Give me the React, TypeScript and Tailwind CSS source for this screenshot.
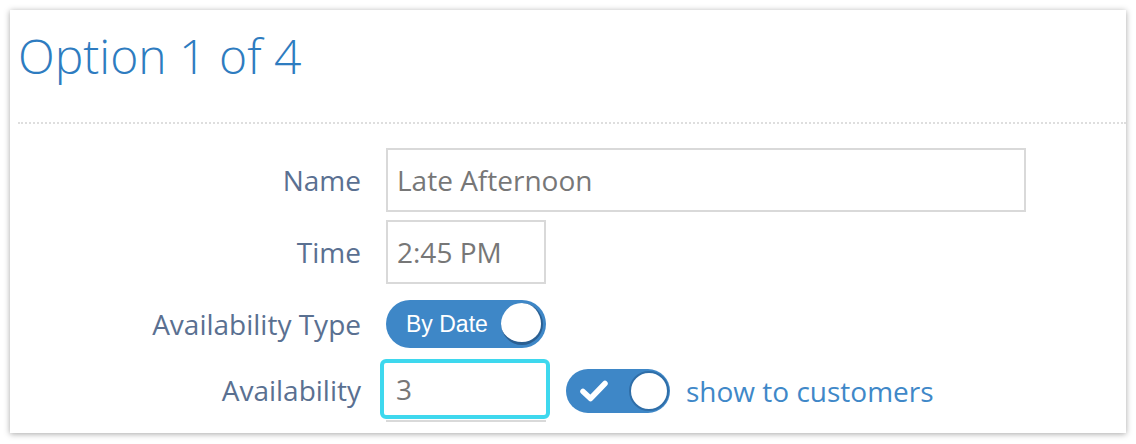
import React from "react";

const labelCls =
  "w-[368px] pr-[25px] text-right text-[28px] leading-none text-[#5a7091] shrink-0";

const Toggle: React.FC<{ children?: React.ReactNode; className?: string }> = ({
  children,
  className,
}) => (
  <div
    className={
      "relative flex items-center rounded-full bg-[#3e87c7] " + (className || "")
    }
  >
    {children}
  </div>
);

export default function App() {
  return (
    <div className="h-[444px] w-[1136px] overflow-hidden bg-white pt-[10px] pl-[10px] font-['Open_Sans',sans-serif]">
      <div className="h-[423px] w-[1116px] overflow-hidden bg-white pl-[8px] shadow-[0_1px_6px_rgba(0,0,0,0.35)]">
        {/* header */}
        <div className="h-[112px] pt-[22px]">
          <h1 className="text-[48px] font-light leading-none text-[#2e7cc0]">
            Option 1 of 4
          </h1>
        </div>
        <div className="border-t-2 border-dotted border-[#dedede]" />

        {/* form */}
        <div className="mt-[24px] flex flex-col">
          <div className="flex h-[64px] items-center">
            <label className={labelCls}>Name</label>
            <div className="flex h-[64px] w-[640px] items-center border-2 border-[#d9d9d9] pl-[9px] text-[28px] text-[#777]">
              Late Afternoon
            </div>
          </div>

          <div className="mt-[8px] flex h-[64px] items-center">
            <label className={labelCls}>Time</label>
            <div className="flex h-[64px] w-[160px] items-center border-2 border-[#d9d9d9] pl-[9px] text-[28px] text-[#777]">
              2:45 PM
            </div>
          </div>

          <div className="mt-[8px] flex h-[64px] items-center">
            <label className={labelCls}>Availability Type</label>
            <Toggle className="h-[48px] w-[160px]">
              <span className="pl-[20px] font-['Liberation_Sans',sans-serif] text-[23px] text-white">
                By Date
              </span>
              <span className="absolute top-[3px] right-[3px] h-[42px] w-[42px] rounded-full border-b-[3px] border-r-[2px] border-[#2a5f92] bg-white" />
            </Toggle>
          </div>

          <div className="mt-[2px] flex h-[64px] items-center">
            <label className={labelCls}>Availability</label>
            <div className="relative h-[64px] w-[160px] border-b-2 border-[#d9d9d9]">
              <div className="absolute top-[1px] right-[-4px] bottom-[1px] left-[-6px] flex items-center rounded-[6px] border-[4px] border-[#3ed8ee] bg-white pl-[12px] text-[28px] text-[#777]">
                3
              </div>
            </div>
            <Toggle className="ml-[20px] mt-[2px] h-[44px] w-[104px]">
              <svg
                className="ml-[13px]"
                width="30"
                height="24"
                viewBox="0 0 30 24"
                fill="none"
              >
                <path
                  d="M4 12.5 L11.5 19.5 L26 4.5"
                  stroke="white"
                  strokeWidth="5.5"
                  strokeLinecap="round"
                  strokeLinejoin="round"
                />
              </svg>
              <span className="absolute top-[2px] right-[1px] h-[40px] w-[40px] rounded-full border-2 border-[#2f6ea8] bg-white" />
            </Toggle>
            <span className="ml-[16px] mt-[2px] text-[28px] leading-none text-[#3f88c8]">
              show to customers
            </span>
          </div>
        </div>
      </div>
    </div>
  );
}
